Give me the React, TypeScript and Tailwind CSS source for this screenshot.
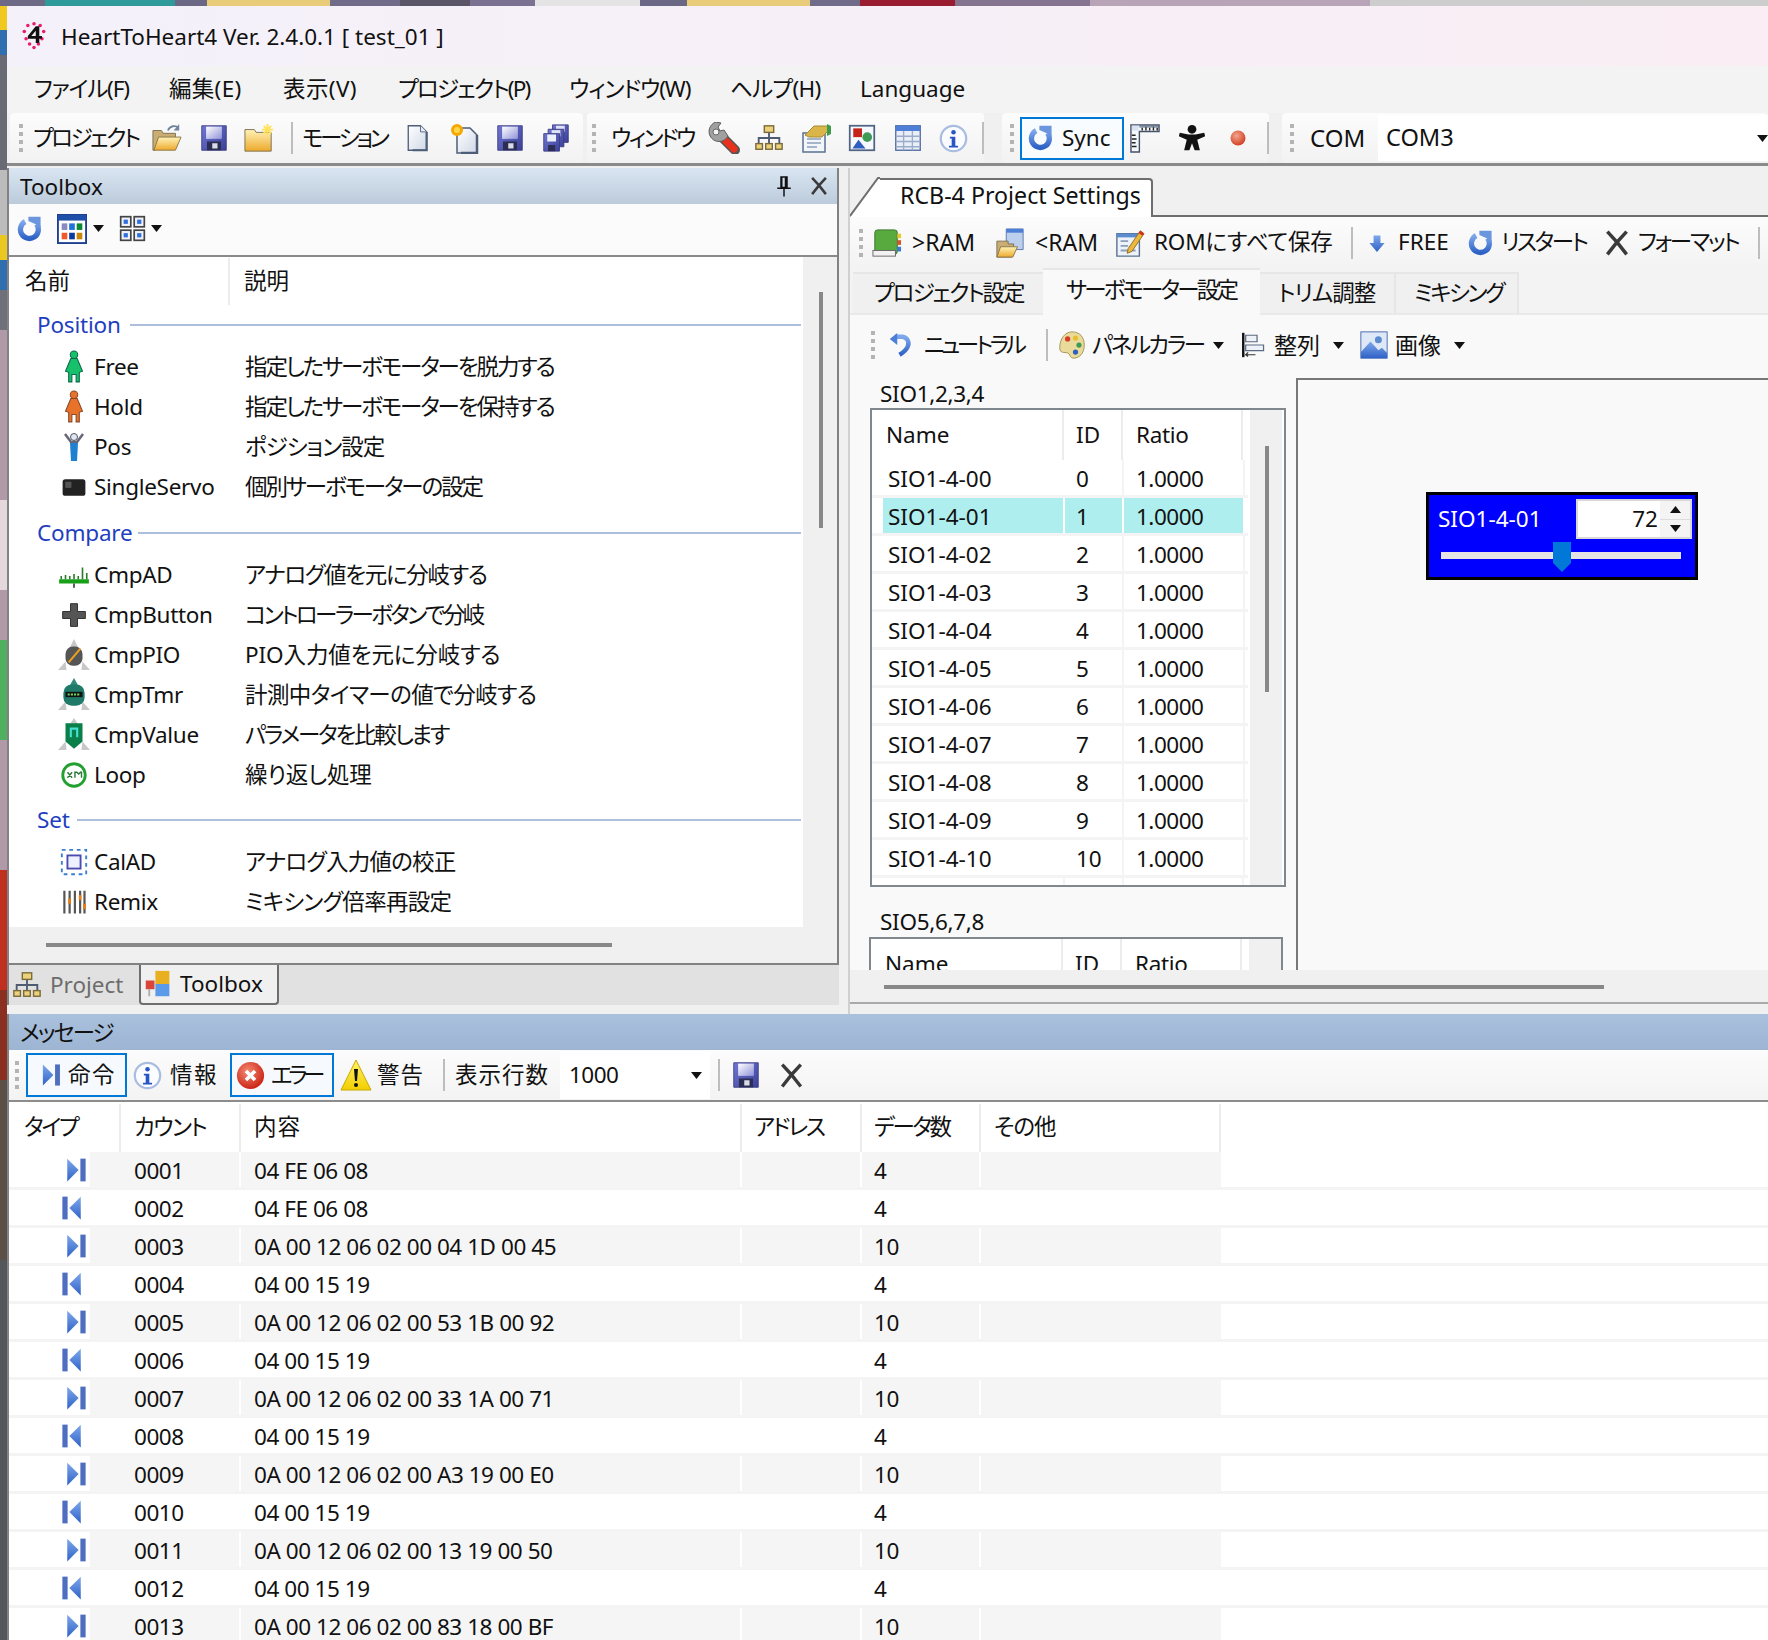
import type { ReactNode } from "react";

// ─── Icons ────────────────────────────────────────────────────────────────────

function Defs() {
  return (
    <svg width="0" height="0" className="absolute">
      <defs>
        <linearGradient id="gFolder" x1="0" y1="0" x2="0" y2="1">
          <stop offset="0" stopColor="#fff3b8" />
          <stop offset="1" stopColor="#eda92c" />
        </linearGradient>
        <linearGradient id="gLabel" x1="0" y1="0" x2="1" y2="1">
          <stop offset="0" stopColor="#ffffff" />
          <stop offset="1" stopColor="#8f93d8" />
        </linearGradient>
        <linearGradient id="gFloppy" x1="0" y1="0" x2="1" y2="1">
          <stop offset="0" stopColor="#7277d6" />
          <stop offset="1" stopColor="#3a3f96" />
        </linearGradient>
        <linearGradient id="gArrow" x1="0" y1="0" x2="0" y2="1">
          <stop offset="0" stopColor="#7fa8ec" />
          <stop offset="1" stopColor="#2f62c6" />
        </linearGradient>
        <linearGradient id="gPage" x1="0" y1="0" x2="1" y2="1">
          <stop offset="0" stopColor="#ffffff" />
          <stop offset="1" stopColor="#cfd8e6" />
        </linearGradient>
        <radialGradient id="gDot" cx="0.4" cy="0.35" r="0.7">
          <stop offset="0" stopColor="#f3a58e" />
          <stop offset="1" stopColor="#d13a1e" />
        </radialGradient>
        <radialGradient id="gErr" cx="0.4" cy="0.35" r="0.7">
          <stop offset="0" stopColor="#f58a72" />
          <stop offset="1" stopColor="#c81e10" />
        </radialGradient>
        <linearGradient id="gWarn" x1="0" y1="0" x2="0" y2="1">
          <stop offset="0" stopColor="#fff36a" />
          <stop offset="1" stopColor="#f2cf00" />
        </linearGradient>
      </defs>
    </svg>
  );
}

type IconProps = { s?: number; className?: string };

function Svg({ s = 30, className, children }: IconProps & { children: ReactNode }) {
  return (
    <svg width={s} height={s} viewBox="0 0 32 32" className={`shrink-0 ${className ?? ""}`}>
      {children}
    </svg>
  );
}

const FolderOpen = (p: IconProps) => (
  <Svg {...p}>
    <path d="M1 8h9l2 3h13v5H7L3 29H1z" fill="#c9ad72" stroke="#7d6f52" />
    <path d="M7 15h24l-6 14H2z" fill="url(#gFolder)" stroke="#8a7648" />
    <path d="M17 8c2-5 8-6 11-3" fill="none" stroke="#71849d" strokeWidth="2" />
    <path d="M29 1v7h-6z" fill="#71849d" />
  </Svg>
);

const Floppy = (p: IconProps) => (
  <Svg {...p}>
    <path d="M2 2h28v28H2z" fill="url(#gFloppy)" stroke="#3a3d80" />
    <rect x="7" y="3" width="18" height="14" fill="url(#gLabel)" />
    <rect x="8" y="20" width="16" height="10" fill="#2b2e52" />
    <rect x="14" y="22" width="6" height="6" fill="#d9dbe8" />
  </Svg>
);

const NewFolder = (p: IconProps) => (
  <Svg {...p}>
    <path d="M1 7h10l2 3h16v20H1z" fill="url(#gFolder)" stroke="#7d6f52" />
    <path d="M25 1v12M19 7h12M21 3l8 8M29 3l-8 8" stroke="#ffe25a" strokeWidth="2" />
  </Svg>
);

const Doc = (p: IconProps) => (
  <Svg {...p}>
    <path d="M6 2h14l7 7v21H6z" fill="url(#gPage)" stroke="#4e5e78" strokeWidth="1.5" />
    <path d="M20 2v7h7" fill="#e8edf5" stroke="#4e5e78" />
    <path d="M27 9v21H11" fill="none" stroke="#4e5e78" strokeWidth="2.5" />
  </Svg>
);

const NewDoc = (p: IconProps) => (
  <Svg {...p}>
    <path d="M9 6h13l7 7v18H9z" fill="url(#gPage)" stroke="#4e5e78" strokeWidth="1.5" />
    <path d="M29 13v18H13" fill="none" stroke="#4e5e78" strokeWidth="2.5" />
    <circle cx="9" cy="8" r="6" fill="#f5a800" />
    <circle cx="9" cy="8" r="3" fill="#ffd84a" />
  </Svg>
);

const MultiFloppy = (p: IconProps) => (
  <Svg {...p}>
    <path d="M12 1h18v20H12z" fill="url(#gFloppy)" stroke="#3a3d80" />
    <rect x="16" y="2" width="10" height="7" fill="#dfe2f5" />
    <path d="M7 6h18v20H7z" fill="url(#gFloppy)" stroke="#3a3d80" />
    <rect x="11" y="7" width="10" height="7" fill="#dfe2f5" />
    <path d="M2 11h18v20H2z" fill="url(#gFloppy)" stroke="#3a3d80" />
    <rect x="6" y="12" width="10" height="8" fill="#eef0fa" />
    <rect x="7" y="24" width="8" height="7" fill="#2b2e52" />
  </Svg>
);

const Wrench = (p: IconProps) => (
  <Svg {...p}>
    <path d="M14 15L27 28" stroke="#555" strokeWidth="10" strokeLinecap="round" />
    <path d="M15 16L26 27" stroke="#e8321e" strokeWidth="7" strokeLinecap="round" />
    <path d="M8 0a10 10 0 1 0 12 14l-4-6-4 1-2-4 3-4z" fill="#a0a0a0" stroke="#5c5c5c" />
    <circle cx="8" cy="10" r="3" fill="#f4f4f4" stroke="#666" />
  </Svg>
);

const Hierarchy = ({ c = "#4d5b73", ...p }: IconProps & { c?: string }) => (
  <Svg {...p}>
    <path d="M16 9v7M5 22v-6h22v6M16 16v6" stroke={c} strokeWidth="2" fill="none" />
    <rect x="11" y="3" width="10" height="7" fill="#ecd27a" stroke="#7b6a3a" strokeWidth="1.5" />
    <rect x="2" y="22" width="7" height="6" fill="#ecd27a" stroke="#7b6a3a" strokeWidth="1.5" />
    <rect x="12.500" y="22" width="7" height="6" fill="#ecd27a" stroke="#7b6a3a" strokeWidth="1.5" />
    <rect x="23" y="22" width="7" height="6" fill="#ecd27a" stroke="#7b6a3a" strokeWidth="1.5" />
  </Svg>
);

const FormHat = (p: IconProps) => (
  <Svg {...p}>
    <path d="M3 11h22v19H3z" fill="#f2f6fb" stroke="#5a7291" strokeWidth="1.5" />
    <path d="M7 17h14M7 21h14M7 25h10" stroke="#8ba0bb" strokeWidth="1.5" />
    <path d="M5 13L14 4h14v5l-6 6H9z" fill="#d9b54a" stroke="#a68a35" />
    <path d="M27 2l4 2v8l-4 2z" fill="#3c9c4a" />
  </Svg>
);

const Picture = (p: IconProps) => (
  <Svg {...p}>
    <rect x="2" y="2" width="28" height="28" fill="#f5f8fc" stroke="#4f6482" strokeWidth="2" />
    <rect x="6" y="5" width="10" height="10" fill="#c4231a" />
    <circle cx="22" cy="15" r="5.5" fill="#3f9a56" />
    <path d="M5 28l7-10 8 10z" fill="#2f5fc0" />
  </Svg>
);

const Table = (p: IconProps) => (
  <Svg {...p}>
    <rect x="2" y="2" width="28" height="28" fill="#e9eef7" stroke="#4f6aa0" strokeWidth="1.5" />
    <rect x="2" y="2" width="28" height="6" fill="#4d7fd8" />
    <path d="M2 14h28M2 20h28M2 26h28M11 8v22M21 8v22" stroke="#9aacc9" strokeWidth="1.5" />
  </Svg>
);

const Info = (p: IconProps) => (
  <Svg {...p}>
    <circle cx="16" cy="16" r="14" fill="#fbfcff" stroke="#a8bde0" strokeWidth="2.5" />
    <circle cx="16" cy="9" r="2.5" fill="#2a55c4" />
    <path d="M12 14h6v10h3v2H11v-2h3v-8h-2z" fill="#2a55c4" />
  </Svg>
);

const Refresh = (p: IconProps) => (
  <Svg {...p}>
    <path d="M10 7a11 11 0 1 0 14 3" fill="none" stroke="url(#gArrow)" strokeWidth="6.5" />
    <path d="M14 1h15v14l-6-5-9-4z" fill="#6b96de" />
  </Svg>
);

const Ruler = (p: IconProps) => (
  <Svg {...p}>
    <path d="M1 2h30v7H10v22H1z" fill="#f5f7fa" stroke="#44526c" strokeWidth="1.5" />
    <path d="M13 8V5M17 8V4M21 8V5M25 8V4M29 8V5M2 13h4M2 17h5M2 21h4M2 25h5" stroke="#222" strokeWidth="1.5" />
    <rect x="2" y="3" width="7" height="5" fill="#d8e2f0" />
    <path d="M10 2h21v3H10z" fill="#54667f" opacity="0.7" />
  </Svg>
);

const Man = (p: IconProps) => (
  <Svg {...p}>
    <circle cx="16" cy="6" r="5" fill="#111" />
    <path d="M2 10l10 2h8l10-2 1 4-9 4 3 12h-6l-3-8-3 8H7l3-12-9-4z" fill="#111" />
  </Svg>
);

const Dot = (p: IconProps) => (
  <Svg {...p}>
    <circle cx="16" cy="16" r="8" fill="url(#gDot)" />
  </Svg>
);

const Cross = (p: IconProps) => (
  <Svg {...p}>
    <path d="M5 3l11 12L27 3M5 29l11-14 11 14" fill="none" stroke="#3a3a3a" strokeWidth="4" />
  </Svg>
);

const Caret = () => (
  <svg width="11" height="7" viewBox="0 0 11 7" className="shrink-0">
    <path d="M0 0h11L5.500 7z" fill="#111" />
  </svg>
);

const Book = (p: IconProps) => (
  <Svg {...p}>
    <rect x="3" y="2" width="24" height="26" rx="3" fill="#58a93e" stroke="#36702a" />
    <rect x="1" y="24" width="24" height="6" fill="#f2f2f2" stroke="#666" />
    <path d="M27 6h4v5h-4z" fill="#e8c92f" />
    <path d="M27 13h4v5h-4z" fill="#d4552b" />
    <path d="M27 20h4v5h-4z" fill="#3a78d8" />
  </Svg>
);

const FolderDoc = (p: IconProps) => (
  <Svg {...p}>
    <path d="M12 1h18v22H12z" fill="#bcd0ee" stroke="#5a78ad" />
    <rect x="12" y="1" width="18" height="4" fill="#4d7fd8" />
    <path d="M2 14h12v3h6l-2 14H2z" fill="#c9ad72" stroke="#7d6f52" />
    <path d="M6 20h18l-5 11H2z" fill="url(#gFolder)" stroke="#8a7648" />
  </Svg>
);

const FormPen = (p: IconProps) => (
  <Svg {...p}>
    <path d="M2 6h24v24H2z" fill="#eef3fa" stroke="#5a7291" strokeWidth="1.5" />
    <path d="M2 6h24v4H2z" fill="#5d8bd0" />
    <path d="M6 14h8M6 19h8M6 24h8M16 24h6" stroke="#8ba0bb" strokeWidth="2" />
    <path d="M14 22L27 3l4 3-13 19-5 2z" fill="#e8b93f" stroke="#96691e" />
    <path d="M26 4l4 3" stroke="#d42e1e" strokeWidth="3" />
  </Svg>
);

const DownArrow = (p: IconProps) => (
  <Svg {...p}>
    <path d="M11 5h10v11h6L16 29 5 16h6z" fill="url(#gArrow)" />
  </Svg>
);

const UndoArrow = (p: IconProps) => (
  <Svg {...p}>
    <path d="M8 5h10a9 9 0 0 1 7 13c-2 5-6 8-11 11" fill="none" stroke="url(#gArrow)" strokeWidth="6" />
    <path d="M11 0v16L1 8z" fill="#4d7fd8" />
  </Svg>
);

const Palette = (p: IconProps) => (
  <Svg {...p}>
    <path d="M16 1c9 0 14 6 14 15 0 10-6 15-12 15-5 0-4-5-7-6-4-1-9 1-9-6C2 9 8 1 16 1z" fill="#eadb9a" stroke="#9a8a4a" />
    <circle cx="11" cy="9" r="3" fill="#d83a2a" />
    <circle cx="20" cy="8" r="3" fill="#e8c02f" />
    <circle cx="24" cy="16" r="3" fill="#3f9a56" />
    <circle cx="20" cy="24" r="3" fill="#2f5fc0" />
  </Svg>
);

const AlignLeft = (p: IconProps) => (
  <Svg {...p}>
    <path d="M4 1v30" stroke="#111" strokeWidth="3" />
    <path d="M7 4h14v8H7zM7 16h22v7H7z" fill="#eef2f8" stroke="#5a6a80" strokeWidth="1.5" />
    <path d="M19 28H7l3-3M7 28l3 2" stroke="#333" strokeWidth="1.5" fill="none" />
  </Svg>
);

const Landscape = (p: IconProps) => (
  <Svg {...p}>
    <rect x="1" y="1" width="30" height="30" fill="#dfe8f6" stroke="#3b5fa8" />
    <circle cx="21" cy="10" r="4" fill="#5d8bd0" />
    <path d="M1 31V24l11-12 9 10 4-3 6 6v6z" fill="url(#gArrow)" />
  </Svg>
);

const Pin = (p: IconProps) => (
  <Svg {...p}>
    <path d="M11 3h10v15h4v2H7v-2h4zM14 5v12h3V5z" fill="#111" />
    <path d="M16 20v10" stroke="#111" strokeWidth="2" />
  </Svg>
);

const StepRight = (p: IconProps) => (
  <Svg {...p}>
    <path d="M6 3l13 13L6 29z" fill="url(#gArrow)" />
    <rect x="21" y="3" width="6" height="26" fill="#4e6fbf" />
  </Svg>
);

const StepLeft = (p: IconProps) => (
  <Svg {...p}>
    <path d="M26 3L13 16l13 13z" fill="url(#gArrow)" />
    <rect x="5" y="3" width="6" height="26" fill="#4e6fbf" />
  </Svg>
);

const ErrorIcon = (p: IconProps) => (
  <Svg {...p}>
    <circle cx="16" cy="16" r="15" fill="url(#gErr)" />
    <path d="M11 11l10 10M21 11L11 21" stroke="#fff" strokeWidth="4" />
  </Svg>
);

const Warn = (p: IconProps) => (
  <Svg {...p}>
    <path d="M16 1l15 30H1z" fill="url(#gWarn)" stroke="#c8a800" />
    <path d="M14 10h4l-1 12h-2z" fill="#111" />
    <circle cx="16" cy="26" r="2" fill="#111" />
  </Svg>
);

const Figure = ({ c, d, ...p }: IconProps & { c: string; d: string }) => (
  <Svg {...p}>
    <circle cx="16" cy="4.500" r="3.500" fill={c} stroke={d} />
    <path d="M13 8h6l5 12-3 1v9h-3v-7h-4v7h-3v-9l-3-1z" fill={c} stroke={d} />
  </Svg>
);

const PosMan = (p: IconProps) => (
  <Svg {...p}>
    <circle cx="16" cy="6" r="3.500" fill="#dfe8f2" stroke="#556" />
    <path d="M7 3l6 8h6l6-8" fill="none" stroke="#667" strokeWidth="2.500" />
    <path d="M12 12h8l-1 18h-6z" fill="#1f7fd0" />
  </Svg>
);

const Servo = (p: IconProps) => (
  <Svg {...p}>
    <rect x="3" y="7" width="26" height="19" rx="3" fill="#222" />
    <rect x="6" y="10" width="7" height="7" fill="#555" />
  </Svg>
);

const CmpAdIcon = (p: IconProps) => (
  <Svg {...p}>
    <path d="M2 22h28" stroke="#18a018" strokeWidth="4" />
    <path d="M4 20v-3M8 20v-4M12 20v-3M16 20v-5M20 20v-3M24 20V9M28 20v-6" stroke="#2a7a2a" strokeWidth="1.500" />
    <path d="M16 24v4" stroke="#333" strokeWidth="1.500" />
  </Svg>
);

const Plus = (p: IconProps) => (
  <Svg {...p}>
    <path d="M12 3h8v9h9v8h-9v9h-8v-9H3v-8h9z" fill="#555" stroke="#222" />
  </Svg>
);

const PioIcon = (p: IconProps) => (
  <Svg {...p}>
    <path d="M16 1l4 8H12z" fill="#c8c8c8" />
    <path d="M8 22L1 30h8zM24 22l7 8h-8z" fill="#c8c8c8" />
    <rect x="8" y="8" width="16" height="18" rx="7" fill="#555" />
    <path d="M11 23l11-13" stroke="#e8a020" strokeWidth="2" />
  </Svg>
);

const TmrIcon = (p: IconProps) => (
  <Svg {...p}>
    <path d="M16 0l4 7H12z" fill="#2f8a7a" />
    <path d="M8 22L1 30h8zM24 22l7 8h-8z" fill="#c8c8c8" />
    <rect x="6" y="6" width="20" height="20" rx="8" fill="#1f7a6a" />
    <rect x="8" y="13" width="16" height="5" fill="#111" />
    <path d="M10 15.500h12" stroke="#6fd060" strokeWidth="2" strokeDasharray="2 1" />
  </Svg>
);

const ValueIcon = (p: IconProps) => (
  <Svg {...p}>
    <path d="M16 0l4 6H12z" fill="#c8c8c8" />
    <path d="M8 22L1 30h8zM24 22l7 8h-8z" fill="#c8c8c8" />
    <path d="M8 5h16v17l-8 7-8-7z" fill="#0a7f4a" />
    <path d="M12 9h8v9h-2v-7h-4v7h-2z" fill="#45e0d0" />
  </Svg>
);

const LoopIcon = (p: IconProps) => (
  <Svg {...p}>
    <circle cx="16" cy="16" r="12" fill="#fff" stroke="#22a030" strokeWidth="3" />
    <path d="M9 13l5 6M14 13l-5 6M17 19v-6h2l2 2 2-2h1v6" fill="none" stroke="#2a7a3a" strokeWidth="1.500" />
  </Svg>
);

const CalIcon = (p: IconProps) => (
  <Svg {...p}>
    <rect x="9" y="9" width="14" height="14" fill="#eef0ff" stroke="#4a4ab0" strokeWidth="2" />
    <rect x="3" y="3" width="26" height="26" fill="none" stroke="#3a7fd0" strokeWidth="2" strokeDasharray="4 4" />
  </Svg>
);

const RemixIcon = (p: IconProps) => (
  <Svg {...p}>
    <path d="M5 3v26M11 3v26M17 3v26M23 3v26M28 3v26" stroke="#555" strokeWidth="2.500" />
    <path d="M11 12v6M23 8v6M28 18v6" stroke="#e87a10" strokeWidth="3" />
  </Svg>
);

const ToolboxIcon = (p: IconProps) => (
  <Svg {...p}>
    <rect x="2" y="12" width="10" height="10" fill="#d9453a" />
    <path d="M6 22v8" stroke="#aaa" strokeWidth="2" />
    <rect x="13" y="1" width="16" height="15" fill="#e8b020" />
    <rect x="13" y="16" width="16" height="14" fill="#5a9ae8" />
  </Svg>
);

const ColorGrid = (p: IconProps) => (
  <Svg {...p}>
    <rect x="1" y="1" width="30" height="30" fill="#fff" stroke="#1f3f8f" strokeWidth="2" />
    <rect x="1" y="1" width="30" height="6" fill="#1f4fa8" />
    <rect x="5" y="10" width="6" height="7" fill="#8a8ac0" />
    <rect x="13" y="10" width="6" height="7" fill="#1f72d8" />
    <rect x="21" y="10" width="6" height="7" fill="#0a8a30" />
    <rect x="5" y="20" width="6" height="7" fill="#f05a2a" />
    <rect x="13" y="20" width="6" height="7" fill="#0a3a9a" />
    <rect x="21" y="20" width="6" height="7" fill="#c8880a" />
  </Svg>
);

const FourSquares = (p: IconProps) => (
  <Svg {...p}>
    {[
      [2, 2],
      [18, 2],
      [2, 18],
      [18, 18],
    ].map(([x, y]) => (
      <g key={`${x}-${y}`}>
        <rect x={x} y={y} width="12" height="12" fill="#eef2f8" stroke="#444" strokeWidth="2" />
        <rect x={x + 3.5} y={y + 3.5} width="5" height="5" fill="#2f6fe0" />
      </g>
    ))}
  </Svg>
);

// ─── Small parts ──────────────────────────────────────────────────────────────

function Grip() {
  return (
    <div className="flex flex-col gap-[4px] w-[4px] shrink-0">
      <div className="h-[4px] bg-[#b4b4b4]" />
      <div className="h-[4px] bg-[#b4b4b4]" />
      <div className="h-[4px] bg-[#b4b4b4]" />
      <div className="h-[4px] bg-[#b4b4b4]" />
    </div>
  );
}

function Sep({ className }: { className?: string }) {
  return <div className={`w-[2px] h-[32px] bg-[#bdbdbd] shrink-0 ${className ?? ""}`} />;
}

function TB({ className, children }: { className?: string; children: ReactNode }) {
  return (
    <div
      className={`flex items-center h-full shrink-0 rounded-[4px] bg-gradient-to-b from-[#fcfcfc] to-[#f2f2f2] ${className ?? ""}`}
    >
      {children}
    </div>
  );
}

// Toolbar label with a fixed slot, so the icons after it stay in place
function L({ className, children }: { className: string; children: ReactNode }) {
  return <span className={`inline-block shrink-0 whitespace-nowrap ${className}`}>{children}</span>;
}

// ─── Data ─────────────────────────────────────────────────────────────────────

const toolGroups: {
  title: string;
  lineGap: string;
  rows: { icon: ReactNode; name: string; desc: string; t: string }[];
}[] = [
  {
    title: "Position",
    lineGap: "w-[93px]",
    rows: [
      { icon: <Figure s={34} c="#17c06a" d="#0a6a4a" />, name: "Free", desc: "指定したサーボモーターを脱力する", t: "tracking-[-2.1px]" },
      { icon: <Figure s={34} c="#e8722a" d="#8a4a2a" />, name: "Hold", desc: "指定したサーボモーターを保持する", t: "tracking-[-2.1px]" },
      { icon: <PosMan s={32} />, name: "Pos", desc: "ポジション設定", t: "tracking-[-1px]" },
      { icon: <Servo s={28} />, name: "SingleServo", desc: "個別サーボモーターの設定", t: "tracking-[-2.1px]" },
    ],
  },
  {
    title: "Compare",
    lineGap: "w-[101px]",
    rows: [
      { icon: <CmpAdIcon s={34} />, name: "CmpAD", desc: "アナログ値を元に分岐する", t: "tracking-[-1.3px]" },
      { icon: <Plus s={28} />, name: "CmpButton", desc: "コントローラーボタンで分岐", t: "tracking-[-2.6px]" },
      { icon: <PioIcon s={34} />, name: "CmpPIO", desc: "PIO入力値を元に分岐する", t: "tracking-[-0.1px]" },
      { icon: <TmrIcon s={34} />, name: "CmpTmr", desc: "計測中タイマーの値で分岐する", t: "tracking-[-0.6px]" },
      { icon: <ValueIcon s={34} />, name: "CmpValue", desc: "パラメータを比較します", t: "tracking-[-2.2px]" },
      { icon: <LoopIcon s={30} />, name: "Loop", desc: "繰り返し処理", t: "tracking-[-0.2px]" },
    ],
  },
  {
    title: "Set",
    lineGap: "w-[40px]",
    rows: [
      { icon: <CalIcon s={30} />, name: "CalAD", desc: "アナログ入力値の校正", t: "tracking-[-0.8px]" },
      { icon: <RemixIcon s={28} />, name: "Remix", desc: "ミキシング倍率再設定", t: "tracking-[-0.7px]" },
    ],
  },
];

const messages: [string, string, string][] = [
  ["0001", "04 FE 06 08", "4"],
  ["0002", "04 FE 06 08", "4"],
  ["0003", "0A 00 12 06 02 00 04 1D 00 45", "10"],
  ["0004", "04 00 15 19", "4"],
  ["0005", "0A 00 12 06 02 00 53 1B 00 92", "10"],
  ["0006", "04 00 15 19", "4"],
  ["0007", "0A 00 12 06 02 00 33 1A 00 71", "10"],
  ["0008", "04 00 15 19", "4"],
  ["0009", "0A 00 12 06 02 00 A3 19 00 E0", "10"],
  ["0010", "04 00 15 19", "4"],
  ["0011", "0A 00 12 06 02 00 13 19 00 50", "10"],
  ["0012", "04 00 15 19", "4"],
  ["0013", "0A 00 12 06 02 00 83 18 00 BF", "10"],
];

const messageColumns = [
  ["w-[112px] pl-[15px]", "タイプ", "tracking-[-2.2px]"],
  ["w-[120px] pl-[13px]", "カウント", "tracking-[-1.6px]"],
  ["w-[501px] pl-[13px]", "内容", "tracking-[1px]"],
  ["w-[120px] pl-[12px]", "アドレス", "tracking-[-2.2px]"],
  ["w-[119px] pl-[12px]", "データ数", "tracking-[-2.5px]"],
  ["w-[240px] pl-[13px]", "その他", "tracking-[-1px]"],
];

const servoRows = Array.from({ length: 11 }, (_, i) => ({
  name: `SIO1-4-${String(i).padStart(2, "0")}`,
  id: String(i),
}));

// ─── Panels ───────────────────────────────────────────────────────────────────

function ServoGrid({ rows, selected }: { rows: typeof servoRows; selected?: number }) {
  return (
    <div className="flex-1 border-2 border-[#80888e] bg-white flex min-h-0 overflow-hidden">
      <div className="w-[376px] shrink-0">
        <div className="flex h-[50px] items-center">
          <div className="w-[192px] h-full pl-[14px] flex items-center border-r-2 border-[#ececec]">Name</div>
          <div className="w-[59px] h-full pl-[12px] flex items-center border-r-2 border-[#ececec]">ID</div>
          <div className="w-[120px] h-full pl-[13px] flex items-center border-r-2 border-[#ececec] tracking-[-0.3px]">Ratio</div>
        </div>
        {rows.map((r, i) => (
          <div key={r.name} className="flex h-[38px] border-b-[3px] border-[#f4f4f4]">
            <div className="w-[11px] shrink-0" />
            <div
              className={`w-[182px] pl-[5px] pt-[3px] flex items-center border-r-2 border-white ${i === selected ? "bg-[#afeeee]" : ""}`}
            >
              {r.name}
            </div>
            <div
              className={`w-[59px] pl-[11px] pt-[3px] flex items-center border-r-2 ${i === selected ? "bg-[#afeeee] border-white" : "border-[#f4f4f4]"}`}
            >
              {r.id}
            </div>
            <div
              className={`w-[121px] pl-[12px] pt-[3px] flex items-center border-r-2 tracking-[-0.5px] ${i === selected ? "bg-[#afeeee] border-white" : "border-[#f4f4f4]"}`}
            >
              1.0000
            </div>
          </div>
        ))}
        <div className="flex h-[10px]">
          <div className="w-[193px] border-r-2 border-[#f4f4f4]" />
          <div className="w-[59px] border-r-2 border-[#f4f4f4]" />
          <div className="w-[120px] border-r-2 border-[#f4f4f4]" />
        </div>
      </div>
      <div className="w-[32px] ml-[2px] bg-[#f0f0f0] shrink-0 pt-[36px]">
        {rows.length > 0 && <div className="w-[4px] h-[246px] ml-[15px] bg-[#888]" />}
      </div>
    </div>
  );
}

function ToolboxPanel() {
  return (
    <div className="w-[832px] shrink-0 border-l-2 border-r-2 border-b-2 border-[#828282] flex flex-col h-[797px] bg-white">
      <div className="h-[36px] shrink-0 bg-gradient-to-b from-[#d9e5f2] to-[#bccbdb] flex items-center pl-[11px] pr-[8px]">
        <span className="pt-[2px]">Toolbox</span>
        <Pin s={24} className="ml-auto" />
        <Cross s={20} className="ml-[13px]" />
      </div>
      <div className="h-[51px] shrink-0 bg-[#fbfbfb] flex items-center pl-[8px] pb-[2px]">
        <Refresh s={26} />
        <ColorGrid s={30} className="ml-[14px]" />
        <span className="ml-[6px] flex"><Caret /></span>
        <FourSquares s={27} className="ml-[15px]" />
        <span className="ml-[5px] flex"><Caret /></span>
      </div>
      <div className="flex-1 min-h-0 border-t-2 border-[#8a8a8a] flex flex-col bg-[#f0f0f0]">
        <div className="flex-1 min-h-0 flex">
          <div className="w-[794px] shrink-0 bg-white">
            <div className="h-[48px] flex pt-[1px]">
              <div className="w-[221px] pl-[16px] flex items-center border-r-2 border-[#ececec]">名前</div>
              <div className="pl-[14px] flex items-center">説明</div>
            </div>
            {toolGroups.map((g, gi) => (
              <div key={g.title} className={gi === 0 ? "" : gi === 1 ? "mt-[6px]" : "mt-[5px]"}>
                <div className="h-[40px] mb-[2px] flex items-center pl-[28px] text-[#1f3fc0]">
                  <span className={`${g.lineGap} shrink-0 pt-[1px] -tracking-[0.2px]`}>{g.title}</span>
                  <div className="h-[2px] w-full bg-[#aebfde] mr-[2px]" />
                </div>
                {g.rows.map((r) => (
                  <div key={r.name} className="h-[40px] flex items-center">
                    <div className="w-[85px] pl-[45px] flex justify-center shrink-0">{r.icon}</div>
                    <span className="w-[151px] pt-[1px] shrink-0 tracking-[-0.3px]">{r.name}</span>
                    <span className={`pt-[1px] ${r.t}`}>{r.desc}</span>
                  </div>
                ))}
              </div>
            ))}
          </div>
          <div className="flex-1 pt-[35px]">
            <div className="w-[4px] h-[236px] ml-[16px] bg-[#888]" />
          </div>
        </div>
        <div className="h-[36px] shrink-0 flex items-center pl-[37px]">
          <div className="w-[566px] h-[4px] bg-[#888]" />
        </div>
      </div>
    </div>
  );
}

function ProjectSettingsPanel() {
  return (
    <div className="flex-1 min-w-0 flex flex-col border-l-2 border-[#d0d0d0] h-[846px]">
      {/* Document tab */}
      <div className="h-[49px] shrink-0 flex items-end border-b-2 border-[#6e6e6e] bg-[#f0f0f0]">
        <svg width="30" height="40" viewBox="0 0 30 40" className="shrink-0 -mb-[2px]">
          <path d="M0 40L28 1h2v39z" fill="#fff" />
          <path d="M0 39L28 1h2" fill="none" stroke="#6e6e6e" strokeWidth="2" />
        </svg>
        <div className="w-[273px] h-[39px] -mb-[2px] bg-white border-t-2 border-r-2 border-[#6e6e6e] rounded-tr-[4px] pl-[20px] pb-[6px] flex items-center text-[23.2px] whitespace-nowrap">
          RCB-4 Project Settings
        </div>
      </div>

      {/* Settings toolbar */}
      <div className="h-[51px] shrink-0 bg-gradient-to-b from-[#fcfcfc] to-[#f3f3f3] flex items-center pl-[9px] whitespace-nowrap">
        <Grip />
        <Book s={30} className="ml-[9px]" />
        <L className="ml-[10px] w-[65px] text-[23px]">&gt;RAM</L>
        <FolderDoc s={30} className="ml-[18px]" />
        <L className="ml-[10px] w-[65px] text-[23px]">&lt;RAM</L>
        <FormPen s={30} className="ml-[15px]" />
        <L className="ml-[9px] w-[178px] tracking-[-0.2px]">ROMにすべて保存</L>
        <Sep className="ml-[19px]" />
        <DownArrow s={22} className="ml-[13px]" />
        <L className="ml-[10px] w-[51px]">FREE</L>
        <Refresh s={26} className="ml-[19px]" />
        <L className="ml-[7px] w-[86px] tracking-[-2.5px]">リスタート</L>
        <Cross s={28} className="ml-[16px]" />
        <L className="ml-[7px] w-[101px] tracking-[-2.2px]">フォーマット</L>
        <Sep className="ml-[19px]" />
      </div>

      {/* Inner tabs */}
      <div className="h-[47px] shrink-0 flex items-stretch pl-[3px] bg-[#f3f3f3] border-b-2 border-[#e9e9e9] whitespace-nowrap">
        <div className="w-[190px] mt-[4px] pl-[21px] flex items-center bg-[#f0f0f0] border-t-2 border-[#e6e6e6] tracking-[-2px]">プロジェクト設定</div>
        <div className="w-[217px] -mb-[2px] pl-[23px] pb-[4px] flex items-center bg-[#f9f9f9] border-t-2 border-[#e6e6e6] tracking-[-2.8px]">サーボモーター設定</div>
        <div className="w-[136px] mt-[4px] pl-[18px] flex items-center bg-[#f0f0f0] border-t-2 border-r-2 border-[#e6e6e6] tracking-[-0.9px]">トリム調整</div>
        <div className="w-[123px] mt-[4px] pl-[18px] flex items-center bg-[#f0f0f0] border-t-2 border-r-2 border-[#e6e6e6] tracking-[-2.3px]">ミキシング</div>
      </div>

      {/* Panel toolbar */}
      <div className="h-[57px] shrink-0 bg-[#f9f9f9] flex items-center pl-[21px] pt-[3px] whitespace-nowrap">
        <Grip />
        <UndoArrow s={24} className="ml-[14px]" />
        <L className="ml-[11px] w-[102px] tracking-[-3.4px]">ニュートラル</L>
        <Sep className="ml-[20px]" />
        <Palette s={28} className="ml-[10px]" />
        <L className="ml-[6px] w-[110px] tracking-[-2.3px]">パネルカラー</L>
        <span className="ml-[11px] flex"><Caret /></span>
        <AlignLeft s={26} className="ml-[16px]" />
        <L className="ml-[8px] w-[46px] text-[23px]">整列</L>
        <span className="ml-[13px] flex"><Caret /></span>
        <Landscape s={28} className="ml-[16px]" />
        <L className="ml-[7px] w-[48px] text-[23px]">画像</L>
        <span className="ml-[11px] flex"><Caret /></span>
      </div>

      {/* Work area */}
      <div className="flex-1 min-h-0 bg-[#f9f9f9] flex overflow-hidden">
        <div className="w-[446px] shrink-0 pl-[20px] pr-[10px] flex flex-col">
          <div className="h-[36px] pl-[10px] pt-[8px] leading-[28px] shrink-0 tracking-[-0.3px]">SIO1,2,3,4</div>
          <div className="h-[479px] shrink-0 flex">
            <ServoGrid rows={servoRows} selected={1} />
          </div>
          <div className="h-[50px] pl-[10px] pt-[21px] leading-[28px] shrink-0 tracking-[-0.3px]">SIO5,6,7,8</div>
          <div className="-ml-[1px] mr-[3px] h-[60px] shrink-0 flex">
            <ServoGrid rows={[]} />
          </div>
        </div>
        <div className="flex-1 mt-[6px] border-l-2 border-t-2 border-[#777] pl-[128px] pt-[112px]">
          <div className="w-[272px] h-[88px] bg-[#0000ff] border-[3px] border-black flex flex-col text-white pl-[9px] pr-[3px] pt-[4px]">
            <div className="flex items-center h-[40px] shrink-0">
              <span>SIO1-4-01</span>
              <div className="ml-auto w-[116px] h-[40px] bg-white border-2 border-[#d8d8d8] flex items-center text-[#111]">
                <span className="ml-auto pr-[2px]">72</span>
                <div className="w-[30px] h-full flex flex-col gap-[1px] bg-[#dcdcdc] shrink-0">
                  <div className="flex-1 bg-[#f4f4f4] flex items-center justify-center">
                    <svg width="11" height="7" viewBox="0 0 11 7"><path d="M0 7h11L5.500 0z" fill="#111" /></svg>
                  </div>
                  <div className="flex-1 bg-[#f4f4f4] flex items-center justify-center">
                    <svg width="11" height="7" viewBox="0 0 11 7"><path d="M0 0h11L5.500 7z" fill="#111" /></svg>
                  </div>
                </div>
              </div>
            </div>
            <div className="flex-1 flex items-center pl-[3px] pb-[6px] relative">
              <div className="w-[240px] h-[7px] bg-[#e4e4e4]" />
              <svg width="18" height="30" viewBox="0 0 18 30" className="absolute left-[115px] top-[3px]">
                <path d="M0 0h18v21l-9 9-9-9z" fill="#0078d7" />
              </svg>
            </div>
          </div>
        </div>
      </div>

      {/* Horizontal scroll */}
      <div className="h-[34px] shrink-0 bg-[#f0f0f0] flex items-center pl-[34px] pt-[2px] border-b-2 border-[#aaaaaa]">
        <div className="w-[720px] h-[4px] bg-[#888]" />
      </div>
      <div className="h-[10px] shrink-0 bg-[#f0f0f0]" />
    </div>
  );
}

function MessagePanel() {
  return (
    <div className="flex-1 min-h-0 flex flex-col overflow-hidden border-l-2 border-[#828282]">
      <div className="h-[36px] shrink-0 bg-gradient-to-b from-[#a9c1dd] to-[#9db5d3] flex items-center pl-[11px] pt-[2px] tracking-[-2px]">メッセージ</div>
      <div className="h-[52px] shrink-0 bg-gradient-to-b from-[#fcfcfc] to-[#f3f3f3] border-b-2 border-[#8c8c8c] flex items-center pl-[6px] whitespace-nowrap">
        <Grip />
        <div className="ml-[7px] w-[101px] h-[44px] shrink-0 border-2 border-[#0078d7] bg-[#f6fafe] flex items-center pl-[10px]">
          <StepRight s={26} />
          <span className="ml-[4px] tracking-[1.5px]">命令</span>
        </div>
        <Info s={29} className="ml-[6px]" />
        <L className="ml-[8px] w-[48px] tracking-[1.5px]">情報</L>
        <div className="ml-[12px] w-[104px] h-[44px] shrink-0 border-2 border-[#0078d7] bg-[#f6fafe] flex items-center pl-[4px]">
          <ErrorIcon s={29} />
          <span className="ml-[6px] tracking-[-4.5px]">エラー</span>
        </div>
        <Warn s={32} className="ml-[6px]" />
        <L className="ml-[5px] w-[47px] tracking-[1px]">警告</L>
        <Sep className="ml-[19px]" />
        <L className="ml-[10px] w-[95px] tracking-[1px]">表示行数</L>
        <div className="ml-[10px] w-[150px] h-[48px] shrink-0 bg-white flex items-center pl-[9px] tracking-[-0.5px]">
          <span>1000</span>
          <span className="ml-auto mr-[8px] flex"><Caret /></span>
        </div>
        <Sep className="ml-[8px]" />
        <Floppy s={28} className="ml-[12px]" />
        <Cross s={27} className="ml-[18px]" />
      </div>
      <div className="flex-1 min-h-0 bg-white overflow-hidden">
        <div className="flex h-[50px] pt-[2px]">
          {messageColumns.map(([w, t, track]) => (
            <div key={t} className={`${w} pb-[2px] flex items-center border-r-2 border-[#ececec] ${track}`}>
              {t}
            </div>
          ))}
        </div>
        {messages.map(([count, body, n], i) => {
          const out = i % 2 === 0;
          return (
            <div key={count} className="flex h-[38px] border-b-[3px] border-[#f4f4f4] tracking-[-0.45px]">
              <div className={`w-[81px] shrink-0 flex items-center justify-end bg-white ${out ? "" : "pr-[4px]"}`}>
                {out ? <StepRight s={28} /> : <StepLeft s={28} />}
              </div>
              <div className="flex flex-1">
                <div className={`w-[31px] ${out ? "bg-[#f5f5f5]" : ""}`} />
                <div className={`w-[120px] pl-[13px] pt-[4px] flex items-center border-r-2 border-white ${out ? "bg-[#f5f5f5]" : ""}`}>{count}</div>
                <div className={`w-[501px] pl-[13px] pt-[4px] flex items-center border-r-2 border-white ${out ? "bg-[#f5f5f5]" : ""}`}>{body}</div>
                <div className={`w-[120px] border-r-2 border-white ${out ? "bg-[#f5f5f5]" : ""}`} />
                <div className={`w-[119px] pl-[12px] pt-[4px] flex items-center border-r-2 border-white ${out ? "bg-[#f5f5f5]" : ""}`}>{n}</div>
                <div className={`w-[240px] ${out ? "bg-[#f5f5f5]" : ""}`} />
              </div>
            </div>
          );
        })}
      </div>
    </div>
  );
}

// ─── App ──────────────────────────────────────────────────────────────────────

export default function App() {
  return (
    <div
      lang="ja"
      className="w-[1768px] h-[1640px] overflow-hidden flex flex-col bg-[#f0f0f0] text-[#111] text-[22.5px] leading-none font-['Noto_Sans','Noto_Sans_CJK_JP',sans-serif] [font-feature-settings:'palt']"
    >
      <Defs />
      {/* Desktop behind the window */}
      <div className="h-[6px] shrink-0 flex">
        <div className="w-[45px] bg-[#6e6a85]" />
        <div className="w-[130px] bg-[#2f9a9a]" />
        <div className="w-[32px] bg-[#6b6885]" />
        <div className="w-[123px] bg-[#e9cc7a]" />
        <div className="w-[70px] bg-[#6f6b88]" />
        <div className="w-[70px] bg-[#5a5668]" />
        <div className="w-[65px] bg-[#7a7290]" />
        <div className="w-[105px] bg-[#e4e4e4]" />
        <div className="w-[47px] bg-[#6b6885]" />
        <div className="w-[123px] bg-[#e9cc7a]" />
        <div className="w-[50px] bg-[#6f6b88]" />
        <div className="w-[95px] bg-[#9a1c30]" />
        <div className="w-[135px] bg-[#847490]" />
        <div className="w-[280px] bg-[#b9a3b7]" />
        <div className="flex-1 bg-[#cdcdcd]" />
      </div>
      <div className="flex-1 min-h-0 flex">
        <div className="w-[7px] shrink-0 flex flex-col">
          <div className="h-[24px] bg-[#f0c820]" />
          <div className="h-[25px] bg-[#2f6fb0]" />
          <div className="h-[115px] bg-[#6a6a74]" />
          <div className="h-[65px] bg-[#bcbcbc]" />
          <div className="h-[25px] bg-[#eac820]" />
          <div className="h-[30px] bg-[#2f6fb0]" />
          <div className="h-[40px] bg-[#70707a]" />
          <div className="h-[170px] bg-[#b09aa8]" />
          <div className="h-[90px] bg-[#e4d8dc]" />
          <div className="h-[50px] bg-[#b09aa8]" />
          <div className="h-[100px] bg-[#4fb060]" />
          <div className="h-[130px] bg-[#b09aa8]" />
          <div className="h-[120px] bg-[#c03020]" />
          <div className="h-[90px] bg-[#8a3020]" />
          <div className="h-[180px] bg-[#5a5048]" />
          <div className="flex-1 bg-[#55555c]" />
        </div>

        <div className="flex-1 min-w-0 flex flex-col">
          {/* Title bar */}
          <div className="h-[60px] shrink-0 bg-gradient-to-r from-[#f4f1fa] to-[#faeef4] flex items-center pl-[12px]">
            <svg width="30" height="30" viewBox="0 0 34 34" className="shrink-0">
              <circle cx="17" cy="3" r="2" fill="#ec1a6a" />
              <circle cx="10" cy="5" r="2" fill="#ec1a6a" />
              <circle cx="24" cy="5" r="2" fill="#ec1a6a" />
              <circle cx="6" cy="12" r="2" fill="#ec1a6a" />
              <circle cx="28" cy="12" r="2" fill="#ec1a6a" />
              <circle cx="8" cy="20" r="2" fill="#ec1a6a" />
              <circle cx="26" cy="20" r="2" fill="#ec1a6a" />
              <circle cx="17" cy="30" r="2" fill="#ec1a6a" />
              <circle cx="12" cy="26" r="2" fill="#ec1a6a" />
              <circle cx="22" cy="26" r="2" fill="#ec1a6a" />
              <path d="M19 6h4v11h3v3h-3v5h-4v-5h-9v-3zM19 11l-5 6h5z" fill="#111" />
            </svg>
            <span className="ml-[12px] pt-[2px] whitespace-nowrap">HeartToHeart4 Ver. 2.4.0.1 [ test_01 ]</span>
          </div>

          {/* Menu bar */}
          <div className="h-[47px] shrink-0 bg-[#f3f3f3] flex items-center pl-[27px]">
            <L className="w-[96px] tracking-[-1.2px]">ファイル(F)</L>
            <L className="ml-[39px] w-[73px] tracking-[0.3px]">編集(E)</L>
            <L className="ml-[41px] w-[76px] tracking-[0.4px]">表示(V)</L>
            <L className="ml-[39px] w-[133px] tracking-[-1.8px]">プロジェクト(P)</L>
            <L className="ml-[38px] w-[122px] tracking-[-1.1px]">ウィンドウ(W)</L>
            <L className="ml-[39px] w-[90px] tracking-[-0.7px]">ヘルプ(H)</L>
            <L className="ml-[40px] w-[104px]">Language</L>
          </div>

          {/* Main toolbars */}
          <div className="h-[50px] shrink-0 bg-[#f0f0f0] flex items-center pl-[3px] whitespace-nowrap border-b-[3px] border-[#8a8a8a] box-content">
            <TB className="w-[573px] pl-[9px]">
              <Grip />
              <L className="ml-[10px] w-[105px] tracking-[-2.5px]">プロジェクト</L>
              <FolderOpen s={30} className="ml-[14px]" />
              <Floppy s={28} className="ml-[18px]" />
              <NewFolder s={30} className="ml-[16px]" />
              <Sep className="ml-[17px]" />
              <L className="ml-[9px] w-[86px] tracking-[-3.2px]">モーション</L>
              <Doc s={28} className="ml-[15px]" />
              <NewDoc s={32} className="ml-[17px]" />
              <Floppy s={28} className="ml-[16px]" />
              <MultiFloppy s={28} className="ml-[18px]" />
            </TB>
            <Sep className="ml-[1px] opacity-0" />
            <TB className="w-[397px] ml-[1px] pl-[5px]">
              <Grip />
              <L className="ml-[15px] w-[84px] tracking-[-2.6px]">ウィンドウ</L>
              <Wrench s={32} className="ml-[13px]" />
              <Hierarchy s={30} className="ml-[14px]" />
              <FormHat s={32} className="ml-[16px]" />
              <Picture s={28} className="ml-[16px]" />
              <Table s={28} className="ml-[18px]" />
              <Info s={29} className="ml-[17px]" />
              <Sep className="ml-[14px]" />
            </TB>
            <TB className="w-[267px] ml-[18px] pl-[8px]">
              <Grip />
              <div className="ml-[6px] w-[104px] h-[43px] shrink-0 border-2 border-[#0078d7] bg-[#f9fcff] flex items-center pl-[6px]">
                <Refresh s={26} />
                <span className="ml-[8px]">Sync</span>
              </div>
              <Ruler s={30} className="ml-[6px]" />
              <Man s={28} className="ml-[18px]" />
              <Dot s={30} className="ml-[17px]" />
              <Sep className="ml-[14px]" />
            </TB>
            <div className="flex-1 min-w-0 h-full ml-[13px] pl-[8px] flex items-center rounded-[4px] bg-gradient-to-b from-[#fcfcfc] to-[#f2f2f2]">
              <Grip />
              <L className="ml-[16px] w-[52px] text-[24px]">COM</L>
              <div className="ml-[16px] flex-1 h-[46px] bg-white flex items-center pl-[8px] text-[23.6px]">
                <span>COM3</span>
                <span className="ml-auto flex"><Caret /></span>
              </div>
            </div>
          </div>

          {/* Middle: toolbox + project settings */}
          <div className="h-[848px] shrink-0 flex pt-[2px]">
            <div className="w-[841px] shrink-0 flex flex-col">
              <ToolboxPanel />
              <div className="h-[40px] shrink-0 border-l-2 border-[#828282] bg-[#e1e1e1] mr-[9px] flex items-start">
                <div className="w-[130px] h-full flex items-center pl-[3px] text-[#6d6d6d]">
                  <Hierarchy s={30} />
                  <span className="ml-[8px]">Project</span>
                </div>
                <div className="w-[140px] h-[40px] bg-[#f0f0f0] border-2 border-t-0 border-[#6e6e6e] rounded-b-[4px] flex items-center pl-[3px]">
                  <ToolboxIcon s={28} />
                  <span className="ml-[8px]">Toolbox</span>
                </div>
              </div>
            </div>
            <ProjectSettingsPanel />
          </div>

          <MessagePanel />
        </div>
      </div>
    </div>
  );
}
